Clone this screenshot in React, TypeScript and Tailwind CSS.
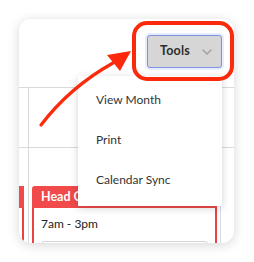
import React from 'react';

const MENU_ITEMS = ['View Month', 'Print', 'Calendar Sync'];

const ChevronDown: React.FC = () => (
    <svg width="10" height="6" viewBox="0 0 10 6" fill="none">
        <path d="M1 1l4 4 4-4" stroke="#9a9a9a" strokeWidth="1.2" strokeLinecap="round" strokeLinejoin="round" />
    </svg>
);

const App: React.FC = () => {
    return (
        <div className="relative w-[254px] h-[262px] bg-white pt-[19px] pl-[19px] font-['Lato','Liberation_Sans',sans-serif]">
            {/* calendar card */}
            <div className="relative w-[215px] h-[224px] bg-white rounded-[12px] overflow-hidden shadow-[0_2px_12px_rgba(0,0,0,0.16)]">
                <div className="h-[68px] flex justify-end items-start pt-[16px] pr-[12px]">
                    <button className="flex items-center w-[75px] h-[33px] pl-[12px] pr-[9px] justify-between rounded-[3px] bg-[#d6d6d6] border border-[#7f91e3] shadow-[0_0_0_2px_rgba(160,180,255,0.25)]">
                        <span className="text-[12.5px] font-bold text-[#2d2d2d] tracking-[0.2px]">Tools</span>
                        <ChevronDown />
                    </button>
                </div>

                <div className="border-t border-[#dadada]">
                    <div className="flex h-[60px] border-b border-[#dadada]">
                        <div className="w-[10px] border-r border-[#dadada]" />
                        <div className="w-[192px] border-r border-[#dadada]" />
                        <div className="flex-1" />
                    </div>
                    <div className="flex h-[120px]">
                        <div className="w-[10px] border-r border-[#dadada] pt-[38px]">
                            <div className="w-[5px] h-[22px] bg-[#f04a4a]" />
                            <div className="w-[5px] h-[60px] border-r-2 border-[#ec4141]" />
                        </div>
                        <div className="w-[192px] border-r border-[#d8dde8] pt-[38px] px-[3px]">
                            <div className="h-[22px] bg-[#f04a4a] rounded-t-[3px] flex items-center pl-[9px]">
                                <span className="text-[12.5px] font-bold text-white">Head Chef</span>
                            </div>
                            <div className="border-x-2 border-[#ec4141] px-[7px] pt-[7px]">
                                <div className="text-[12px] text-[#222] leading-[18px]">7am - 3pm</div>
                                <div className="mt-[8px] h-[30px] border border-[#d4d4d4] rounded-[3px]" />
                            </div>
                        </div>
                        <div className="flex-1" />
                    </div>
                </div>

                {/* tools dropdown */}
                <div className="absolute left-[59px] top-[57px] w-[144px] h-[130px] bg-white pt-[4px] shadow-[0_2px_8px_rgba(0,0,0,0.18)]">
                    {MENU_ITEMS.map(item => (
                        <div key={item} className="h-[40px] flex items-center pl-[18px] text-[12px] text-[#333]">
                            {item}
                        </div>
                    ))}
                </div>
            </div>

            {/* annotation */}
            <div className="absolute left-[132px] top-[21px] w-[102px] h-[60px] rounded-[15px] border-[4px] border-[#fb2a0c]" />
            <svg className="absolute left-0 top-0" width="254" height="262" viewBox="0 0 254 262">
                <path d="M41 125 Q70 87 113 63" stroke="#fb2a0c" strokeWidth="3.2" fill="none" strokeLinecap="round" />
                <polygon points="131,51 107,55 120,71" fill="#fb2a0c" />
            </svg>
        </div>
    );
};

export default App;
